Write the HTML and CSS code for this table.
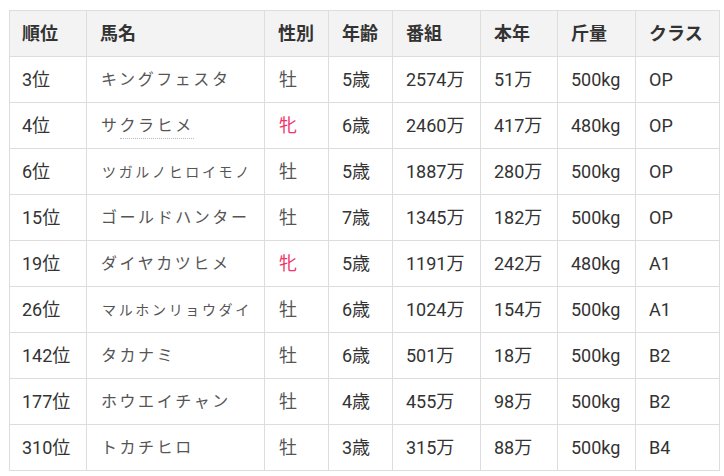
FILE: index.html
```html
<!DOCTYPE html>
<html lang="ja">
<head>
<meta charset="utf-8">
<link rel="stylesheet" href="styles.css">
</head>
<body>
<table class="rank">
  <colgroup>
    <col class="c-rank"><col class="c-name"><col class="c-sex"><col class="c-age"><col class="c-prog"><col class="c-year"><col class="c-wt"><col class="c-cls">
  </colgroup>
  <thead>
    <tr><th>順位</th><th>馬名</th><th>性別</th><th>年齢</th><th>番組</th><th>本年</th><th>斤量</th><th>クラス</th></tr>
  </thead>
  <tbody>
    <tr><td class="first">3位</td><td class="name">キングフェスタ</td><td class="sex">牡</td><td>5歳</td><td>2574万</td><td>51万</td><td>500kg</td><td>OP</td></tr>
    <tr><td class="first">4位</td><td class="name">サ<span class="dotted">クラヒメ</span></td><td class="sex f">牝</td><td>6歳</td><td>2460万</td><td>417万</td><td>480kg</td><td>OP</td></tr>
    <tr><td class="first">6位</td><td class="name long">ツガルノヒロイモノ</td><td class="sex">牡</td><td>5歳</td><td>1887万</td><td>280万</td><td>500kg</td><td>OP</td></tr>
    <tr><td class="first">15位</td><td class="name">ゴールドハンター</td><td class="sex">牡</td><td>7歳</td><td>1345万</td><td>182万</td><td>500kg</td><td>OP</td></tr>
    <tr><td class="first">19位</td><td class="name">ダイヤカツヒメ</td><td class="sex f">牝</td><td>5歳</td><td>1191万</td><td>242万</td><td>480kg</td><td>A1</td></tr>
    <tr><td class="first">26位</td><td class="name long">マルホンリョウダイ</td><td class="sex">牡</td><td>6歳</td><td>1024万</td><td>154万</td><td>500kg</td><td>A1</td></tr>
    <tr><td class="first">142位</td><td class="name">タカナミ</td><td class="sex">牡</td><td>6歳</td><td>501万</td><td>18万</td><td>500kg</td><td>B2</td></tr>
    <tr><td class="first">177位</td><td class="name">ホウエイチャン</td><td class="sex">牡</td><td>4歳</td><td>455万</td><td>98万</td><td>500kg</td><td>B2</td></tr>
    <tr><td class="first">310位</td><td class="name">トカチヒロ</td><td class="sex">牡</td><td>3歳</td><td>315万</td><td>88万</td><td>500kg</td><td>B4</td></tr>
  </tbody>
</table>
</body>
</html>
```

FILE: styles.css
```css
html, body {
  margin: 0;
  padding: 0;
  background: #ffffff;
}
body {
  padding: 10px 0 0 9px;
  font-family: Roboto, "Noto Sans CJK JP", sans-serif;
  color: #333333;
}
.rank {
  border-collapse: collapse;
  table-layout: fixed;
  width: 710px;
  font-size: 18px;
}
.c-rank { width: 77px; }
.c-name { width: 178px; }
.c-sex { width: 64px; }
.c-age { width: 64px; }
.c-prog { width: 88px; }
.c-year { width: 77px; }
.c-wt { width: 78px; }
.c-cls { width: 84px; }
.rank th, .rank td {
  border: 1px solid #dddddd;
  text-align: left;
  padding: 0 13px;
  height: 45px;
  line-height: 22px;
  white-space: nowrap;
  vertical-align: middle;
}
.rank th {
  background: #f3f3f3;
  font-weight: bold;
  height: 45px;
}
.rank th:first-child, .rank td.first {
  padding-left: 12px;
}
.rank td.name {
  font-size: 16px;
  letter-spacing: 0.16em;
  color: #555555;
  padding-left: 14px;
}
.rank td.name.long {
  font-size: 14px;
  letter-spacing: 0.19em;
  padding-left: 15px;
}
.rank td.sex {
  color: #555555;
  padding-left: 14px;
}
.rank td.sex.f {
  color: #f0356a;
}
.dotted {
  border-bottom: 1px dotted #bbbbbb;
  padding-bottom: 3px;
}
```
